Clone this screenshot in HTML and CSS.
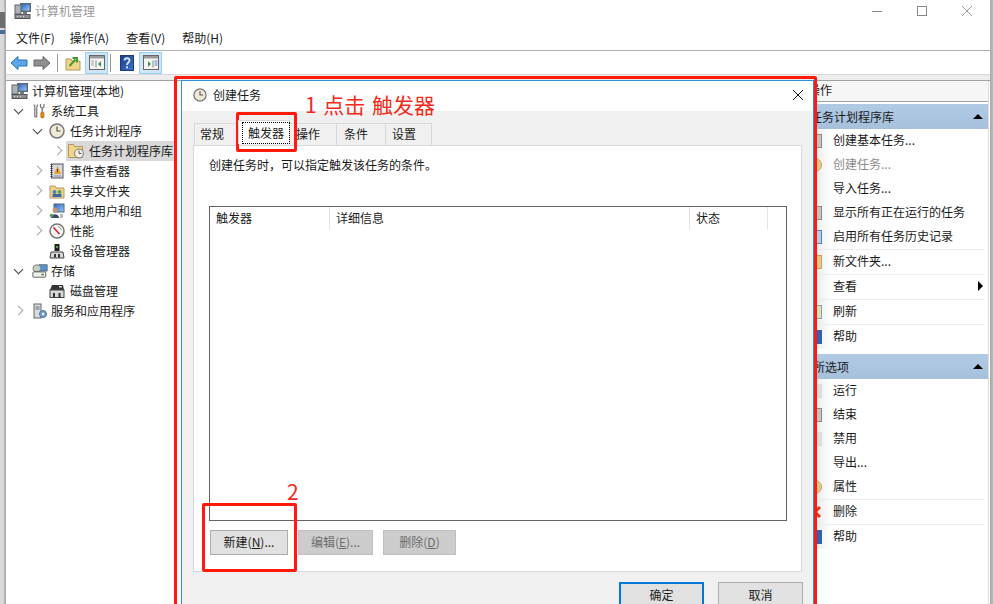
FILE: index.html
```html
<!DOCTYPE html>
<html lang="zh-CN">
<head>
<meta charset="utf-8">
<title>计算机管理</title>
<link rel="stylesheet" href="styles.css">
</head>
<body>
<svg class="defs" width="0" height="0">
  <defs>
    <linearGradient id="g-screen" x1="0" y1="0" x2="1" y2="1"><stop offset="0" stop-color="#2a66c8"/><stop offset="1" stop-color="#9cc8f0"/></linearGradient>
    <linearGradient id="g-help" x1="0" y1="0" x2="1" y2="1"><stop offset="0" stop-color="#1a3f86"/><stop offset="1" stop-color="#3c74c8"/></linearGradient>
  </defs>
  <symbol id="i-computer" viewBox="0 0 18 18">
    <rect x="6" y="1" width="11" height="9" fill="#5a6b7c"/><rect x="7.500" y="2.500" width="8" height="6" fill="url(#g-screen)"/>
    <rect x="1" y="3" width="6" height="9" fill="#aab2ba" stroke="#666"/><rect x="1" y="12.500" width="15" height="4" fill="#8a8f94" stroke="#555"/><rect x="9" y="10" width="4" height="2.500" fill="#777"/><path d="M3 14.500h1M6 14.500h1M9 14.500h1" stroke="#ddd"/>
  </symbol>
  <symbol id="i-clock" viewBox="0 0 16 16">
    <circle cx="8" cy="8" r="7" fill="#efe9d8" stroke="#777" stroke-width="1.500"/><path d="M8 3.500V8H11.500" fill="none" stroke="#555" stroke-width="1.200"/>
  </symbol>
  <symbol id="i-tools" viewBox="0 0 16 16">
    <path d="M2 1.500l.8 3v9.500h2V4.500l.8-3" fill="#e4e4e4" stroke="#666"/><path d="M8.500 1v3l1.800 1.500L12 4V1" fill="none" stroke="#777" stroke-width="1.200"/><path d="M10.300 5.500V9" stroke="#888" stroke-width="1.600"/><rect x="8.800" y="9" width="3.200" height="6" rx="1.200" fill="#dc8a14" stroke="#a85f08" stroke-width=".6"/>
  </symbol>
  <symbol id="i-log" viewBox="0 0 16 16">
    <rect x="2.500" y="1" width="11.500" height="14" fill="#d4dae0" stroke="#556"/><path d="M2.500 1v14" stroke="#334" stroke-width="2" stroke-dasharray="1 1"/><path d="M8.500 3l3.500 8H5z" fill="#e8a020"/><rect x="8" y="6" width="1" height="3" fill="#633"/><path d="M5 13h7" stroke="#889"/>
  </symbol>
  <symbol id="i-share" viewBox="0 0 16 16">
    <path d="M1 3h5l1 2h8v10H1z" fill="#f0d48a" stroke="#b8965a"/><circle cx="5.500" cy="9" r="2" fill="#4a7fc0"/><circle cx="10.500" cy="9" r="2" fill="#5aa050"/><rect x="3.500" y="11" width="9" height="3" fill="#3b6aa0"/>
  </symbol>
  <symbol id="i-users" viewBox="0 0 16 16">
    <rect x="5" y="1" width="10" height="8" fill="url(#g-screen)" stroke="#567"/><circle cx="6" cy="7" r="2.500" fill="#c89468"/><path d="M2 15c0-5 8-5 8 0z" fill="#3a4a70"/><circle cx="2.500" cy="12.500" r="1.800" fill="#5aa050"/><path d="M11 11h3v4h-3z" fill="#bbb"/>
  </symbol>
  <symbol id="i-perf" viewBox="0 0 16 16">
    <circle cx="8" cy="8" r="7" fill="#f6f6f6" stroke="#777" stroke-width="1.500"/><path d="M4.500 4.500L10.500 11" stroke="#d02020" stroke-width="1.600"/><path d="M9 3.500a5 5 0 0 1 3.500 3.500" fill="none" stroke="#999"/>
  </symbol>
  <symbol id="i-device" viewBox="0 0 16 16">
    <rect x="5.500" y="1" width="5" height="7" fill="#222"/><rect x="7.200" y="3" width="1.600" height="2" fill="#5c5"/><path d="M2 9h12l1 6H1z" fill="#d8d8d8" stroke="#444"/><rect x="5" y="11" width="2" height="3.500" fill="#333"/><rect x="9" y="11" width="2" height="3.500" fill="#333"/>
  </symbol>
  <symbol id="i-storage" viewBox="0 0 18 16">
    <rect x="8" y="1" width="9" height="7" fill="#4f94d8" stroke="#567"/><ellipse cx="5.500" cy="5" rx="4.500" ry="4" fill="#c4d0c0" stroke="#777"/><rect x="1" y="9" width="14.500" height="6" rx="1" fill="#eef0ee" stroke="#555"/><rect x="10.500" y="11" width="3" height="2" fill="#5a9a40"/>
  </symbol>
  <symbol id="i-disk" viewBox="0 0 16 16">
    <path d="M3 2h11l1 5H1z" fill="#333"/><rect x="10" y="3" width="3" height="1.500" fill="#ddd"/><rect x="1" y="7" width="14" height="7.500" fill="#d8d8d8" stroke="#444"/><rect x="4" y="10" width="2" height="4.500" fill="#333"/><rect x="9.500" y="10" width="2" height="4.500" fill="#333"/>
  </symbol>
  <symbol id="i-service" viewBox="0 0 16 16">
    <rect x="2" y="1" width="7" height="14" fill="#d8dce0" stroke="#666"/><path d="M3.500 4h4M3.500 6h4" stroke="#667"/><circle cx="11" cy="11" r="3.500" fill="#78a4d0" stroke="#4a74a4"/><circle cx="11" cy="11" r="1.200" fill="#fff"/>
  </symbol>
  <symbol id="i-help" viewBox="0 0 14 16">
    <rect x=".5" y=".5" width="13" height="15" fill="url(#g-help)" stroke="#1a3d7c"/><path d="M4.500 5.500c0-3 5-3 5 0 0 2-2.500 2-2.500 4.500" fill="none" stroke="#d8e4f4" stroke-width="1.800"/><rect x="6" y="11.300" width="2" height="2" fill="#d8e4f4"/>
  </symbol>
</svg>

<div class="window">
  <header class="titlebar">
    <svg class="ico16" width="18" height="18"><use href="#i-computer"/></svg>
    <span class="title-text">计算机管理</span>
    <div class="winctl">
      <svg width="12" height="12" viewBox="0 0 12 12"><path d="M1 6.500h10" stroke="#888"/></svg>
      <svg width="12" height="12" viewBox="0 0 12 12"><rect x="1.500" y="1.500" width="9" height="9" fill="none" stroke="#888"/></svg>
      <svg width="12" height="12" viewBox="0 0 12 12"><path d="M1 1l10 10M11 1L1 11" stroke="#999"/></svg>
    </div>
  </header>
  <nav class="menubar">
    <span class="m-first">文件(F)</span><span>操作(A)</span><span>查看(V)</span><span>帮助(H)</span>
  </nav>
  <div class="toolbar">
    <svg class="tb" width="18" height="18" viewBox="0 0 18 18"><path d="M1 9l7-6.500V6h9v6H8v3.500z" fill="#5aa8e8" stroke="#2a70b8"/></svg>
    <svg class="tb tb-last" width="18" height="18" viewBox="0 0 18 18"><path d="M17 9l-7-6.500V6H1v6h9v3.500z" fill="#909090" stroke="#666"/></svg>
    <i class="tb-sep"></i>
    <svg class="tb tb-folder" width="16" height="16" viewBox="0 0 16 16"><path d="M1 4h5l1 2h8v9H1z" fill="#f0d48a" stroke="#b8965a"/><path d="M4.500 11l6-6.500M7.500 3h4.500v4.500" fill="none" stroke="#4a9a30" stroke-width="2"/></svg>
    <span class="tb-on"><svg width="16" height="15" viewBox="0 0 16 15"><rect x=".5" y=".5" width="15" height="14" fill="#f4f4f4" stroke="#666"/><rect x="1" y="1" width="14" height="2.500" fill="#999"/><path d="M7 5.500v7" stroke="#888"/><path d="M2 6h3M2 8h3M2 10h3" stroke="#aaa"/><path d="M12 6v6l-3-3z" fill="#3a9a50"/></svg></span>
    <i class="tb-sep tb-sep2"></i>
    <svg class="tb tb-help" width="14" height="16"><use href="#i-help"/></svg>
    <span class="tb-on"><svg width="16" height="15" viewBox="0 0 16 15"><rect x=".5" y=".5" width="15" height="14" fill="#f4f4f4" stroke="#666"/><rect x="1" y="1" width="14" height="2.500" fill="#999"/><path d="M10 5.500v7" stroke="#888"/><path d="M11.500 6h3M11.500 8h3M11.500 10h3" stroke="#5a8ac8"/><path d="M5 6v6l3-3z" fill="#3a9a50"/></svg></span>
  </div>
  <div class="strip"></div>

  <main class="panes">
    <aside class="tree">
      <div class="row l0"><svg class="ic" width="18" height="18"><use href="#i-computer"/></svg><span>计算机管理(本地)</span></div>
      <div class="row l1"><b class="chev down"></b><svg class="ic" width="16" height="16"><use href="#i-tools"/></svg><span>系统工具</span></div>
      <div class="row l2"><b class="chev down"></b><svg class="ic" width="16" height="16"><use href="#i-clock"/></svg><span>任务计划程序</span></div>
      <div class="row l3"><b class="chev"></b><span class="sel"><svg class="ic" width="16" height="16" viewBox="0 0 16 16"><path d="M.5 1.500h5l1 2h8v11H.5z" fill="#f0d48a" stroke="#b8965a"/><circle cx="11" cy="10.500" r="4.500" fill="#f4f0e4" stroke="#777"/><path d="M11 7.500v3h2.500" fill="none" stroke="#555"/></svg><span>任务计划程序库</span></span></div>
      <div class="row l2"><b class="chev"></b><svg class="ic" width="16" height="16"><use href="#i-log"/></svg><span>事件查看器</span></div>
      <div class="row l2"><b class="chev"></b><svg class="ic" width="16" height="16"><use href="#i-share"/></svg><span>共享文件夹</span></div>
      <div class="row l2"><b class="chev"></b><svg class="ic" width="16" height="16"><use href="#i-users"/></svg><span>本地用户和组</span></div>
      <div class="row l2"><b class="chev"></b><svg class="ic" width="16" height="16"><use href="#i-perf"/></svg><span>性能</span></div>
      <div class="row l2"><b class="chev none"></b><svg class="ic" width="16" height="16"><use href="#i-device"/></svg><span>设备管理器</span></div>
      <div class="row l1"><b class="chev down"></b><svg class="ic" width="16" height="16"><use href="#i-storage"/></svg><span>存储</span></div>
      <div class="row l2"><b class="chev none"></b><svg class="ic" width="16" height="16"><use href="#i-disk"/></svg><span>磁盘管理</span></div>
      <div class="row l1"><b class="chev"></b><svg class="ic" width="16" height="16"><use href="#i-service"/></svg><span>服务和应用程序</span></div>
    </aside>

    <div class="center"></div>

    <aside class="actions">
      <div class="act-head"><span>操作</span></div>
      <div class="band band-a"><span>任务计划程序库</span><i class="up"></i></div>
      <ul class="act-list">
        <li><span class="aic gray"></span>创建基本任务...</li>
        <li class="off"><span class="aic tan round"></span>创建任务...</li>
        <li><span class="aic none"></span>导入任务...</li>
        <li><span class="aic gray"></span>显示所有正在运行的任务</li>
        <li class="sep"><span class="aic blue"></span>启用所有任务历史记录</li>
        <li class="sep"><span class="aic tan"></span>新文件夹...</li>
        <li class="sep"><span class="aic none"></span>查看<i class="more"></i></li>
        <li class="sep"><span class="aic green"></span>刷新</li>
        <li><span class="aic navy"></span>帮助</li>
      </ul>
      <div class="band band-b"><span>所选项</span><i class="up"></i></div>
      <ul class="act-list">
        <li><span class="aic lt"></span>运行</li>
        <li><span class="aic gray"></span>结束</li>
        <li><span class="aic lt"></span>禁用</li>
        <li><span class="aic none"></span>导出...</li>
        <li class="sep"><span class="aic tan round"></span>属性</li>
        <li class="sep"><svg class="aic none" width="14" height="14" viewBox="0 0 14 14"><path d="M2 2l10 10M12 2L2 12" stroke="#d83a20" stroke-width="3"/></svg>删除</li>
        <li><span class="aic navy"></span>帮助</li>
      </ul>
    </aside>
  </main>
</div>

<section class="dialog">
  <header class="dlg-title">
    <svg class="ic" width="14" height="14"><use href="#i-clock"/></svg>
    <span>创建任务</span>
    <svg class="dlg-x" width="12" height="12" viewBox="0 0 12 12"><path d="M1 1l10 10M11 1L1 11" stroke="#111"/></svg>
  </header>
  <div class="dlg-body">
    <div class="tabs">
      <span class="tab t1">常规</span>
      <span class="tab active"><span class="focus">触发器</span></span>
      <span class="tab t3">操作</span>
      <span class="tab t4">条件</span>
      <span class="tab t5">设置</span>
    </div>
    <div class="panel">
      <p class="hint">创建任务时，可以指定触发该任务的条件。</p>
      <div class="list">
        <div class="list-head">
          <span class="c1">触发器</span><span class="c2">详细信息</span><span class="c3">状态</span>
        </div>
      </div>
      <div class="list-btns">
        <button class="btn b-new">新建(<u>N</u>)...</button>
        <button class="btn b-edit" disabled>编辑(<u>E</u>)...</button>
        <button class="btn b-del" disabled>删除(<u>D</u>)</button>
      </div>
    </div>
    <div class="dlg-foot">
      <button class="btn ok">确定</button>
      <button class="btn cancel">取消</button>
    </div>
  </div>
</section>

<div class="mark m-dialog"></div>
<div class="mark m-tab"></div>
<div class="mark m-new"></div>
<div class="note n1">1 点击 触发器</div>
<div class="note n2">2</div>
</body>
</html>
```
FILE: styles.css
```css
* { box-sizing: border-box; }
html, body { margin: 0; height: 100%; }
body {
  width: 993px; height: 604px; overflow: hidden; position: relative;
  background:
    linear-gradient(#6e6e6e, #6e6e6e) 0 12px / 5px 16px no-repeat,
    linear-gradient(#4a6a9a, #4a6a9a) 0 30px / 5px 4px no-repeat,
    linear-gradient(to right, #dcdcdc 0, #d4d4d4 4px, #a8a8a8 5px, #a8a8a8 6px, #a8a8a8 990px, #bcbcbc 993px);
  padding: 0 3px 0 6px;
  font: 12px/16px "Noto Sans CJK SC", "Noto Sans", sans-serif; color: #1a1a1a;
}
.defs { position: absolute; }
.window { height: 604px; background: #fff; display: flex; flex-direction: column; }
.titlebar { height: 30px; flex: none; display: flex; align-items: center; padding: 0 0 8px 8px; color: #999; }
.title-text { margin-left: 3px; }
.winctl { margin-left: auto; display: flex; gap: 33px; padding-right: 17px; }
.menubar { height: 21px; flex: none; display: flex; gap: 17px; padding: 0 0 4px 10px; align-items: center; border-bottom: 1px solid #b0b0b0; }
.m-first { margin-right: -2px; }
.toolbar { height: 23px; flex: none; display: flex; align-items: center; padding-left: 4px; background: #fff; }
.tb { margin-right: 5px; flex: none; }
.tb-last { margin-right: 6px; }
.tb-sep { width: 1px; height: 18px; background: #999; margin: 0 7px 0 0; flex: none; }
.tb-folder { margin-right: 4px; }
.tb-sep2 { margin: 0 9px 0 2px; }
.tb-on { width: 23px; height: 22px; background: #cfe6f8; border: 1px solid #99d1f5; display: flex; align-items: center; justify-content: center; flex: none; }
.strip { height: 7px; flex: none; background: #ededed; border-top: 1px solid #d8d8d8; border-bottom: 1px solid #a0a0a0; }
.panes { flex: 1; display: flex; min-height: 0; }
.tree { width: 168px; flex: none; padding: 0 0 0 4px; }
.center { flex: 1; }
.row { height: 20px; display: flex; align-items: center; white-space: nowrap; }
.row .ic { flex: none; margin-right: 3px; }
.l0 { padding-left: 1px; }
.l1 { padding-left: 3px; }
.l2 { padding-left: 20px; }
.l2 .ic { margin-right: 5px; }
.l3 { padding-left: 41px; }
.chev { width: 19px; height: 16px; flex: none; position: relative; }
.l3 .chev { width: 15px; }
.chev::before {
  content: ""; position: absolute; left: 2px; top: 4px; width: 6px; height: 6px;
  border-top: 1.4px solid #a6a6a6; border-right: 1.4px solid #a6a6a6; transform: rotate(45deg);
}
.l2 .chev::before { left: 4px; }
.l3 .chev::before { left: 3px; }
.chev.down::before { top: 3px; transform: rotate(135deg); border-color: #444; }
.chev.none::before { display: none; }
.l3 .ic { margin-right: 5px; }
.sel { display: flex; align-items: center; background: #d9d9d9; height: 20px; padding: 0 0 0 2px; width: 108px; }
.actions { width: 186px; flex: none; margin-right: 1px; border-right: 1px solid #dedede; font-size: 12px; }
.act-head { height: 21px; padding: 0 0 2px 5px; display: flex; align-items: center; background: #f6f6f6; border-bottom: 1px solid #a0a0a0; }
.band { height: 25px; background: linear-gradient(#b1cae4, #a6c0dc); display: flex; align-items: center; }
.band-a { margin-top: 2px; padding-left: 7px; }
.band-b { margin-top: 5px; padding-left: 10px; }
.band .up { margin-left: auto; margin-right: 5px; width: 0; height: 0; border: 5px solid transparent; border-top: 0; border-bottom: 5px solid #000; }
.act-list { list-style: none; margin: 0; padding: 0; background: linear-gradient(to right, #ececec 14px, #fff 28px); }
.act-list li { height: 24px; display: flex; align-items: center; position: relative; padding: 0 0 2px 30px; margin-right: 4px; }
.act-list li.sep { height: 25px; border-bottom: 1px solid #ececec; }
.off { color: #8c8c8c; }
.aic { position: absolute; left: 5px; top: 5px; width: 14px; height: 14px; }
.gray { background: #c4c4c4; border: 1px solid #8a8a8a; } .tan { background: #e8c88a; border: 1px solid #c8a060; } .blue { background: #b4cdec; border: 1px solid #5a80b8; }
.round { border-radius: 50%; }
.green { background: #cfe4c8; border: 1px solid #9a9a9a; } .navy { background: #2f62b4; } .lt { background: #dcdcdc; }
.more { margin-left: auto; margin-right: 1px; width: 0; height: 0; border: 5px solid transparent; border-right: 0; border-left: 5px solid #000; }

.dialog { position: absolute; left: 181px; top: 80px; width: 633px; height: 524px; overflow: hidden; background: #f0f0f0; border: 1px solid #2f8fdc; border-bottom: 0; display: flex; flex-direction: column; }
.dlg-title { height: 30px; flex: none; background: #fff; display: flex; align-items: center; padding: 0 0 2px 11px; }
.dlg-title .ic { margin-right: 6px; }
.dlg-x { margin-left: auto; margin-right: 9px; }
.dlg-body { flex: 1; padding: 12px 11px 0 11px; }
.tabs { display: flex; height: 22px; padding-left: 1px; position: relative; }
.tab { height: 22px; padding: 0 0 2px 5px; background: #f0f0f0; border: 1px solid #d9d9d9; border-bottom: 0; display: flex; align-items: center; flex: none; }
.t1 { width: 44px; }
.active { width: 52px; height: 24px; margin-top: -3px; background: #fff; z-index: 1; padding: 0 0 0 4px; }
.t3 { width: 48px; margin-left: -1px; border-left: 0; padding-left: 7px; }
.t4 { width: 49px; border-left: 0; padding-left: 7px; }
.t5 { width: 46px; border-left: 0; padding-left: 6px; }
.focus { outline: 1px dotted #000; padding: 2px 5px; white-space: nowrap; line-height: 16px; }
.panel { height: 427px; background: #fff; border: 1px solid #d9d9d9; padding: 11px 14px 0 15px; }
.hint { margin: 0; height: 16px; }
.list { height: 315px; margin-top: 33px; border: 1px solid #646464; }
.list-head { display: flex; height: 23px; align-items: center; }
.list-head span { height: 23px; padding: 0 0 2px 6px; border-right: 1px solid #e4e4e4; display: flex; align-items: center; }
.c1 { width: 120px; } .c2 { width: 360px; } .c3 { width: 78px; }
.list-btns { display: flex; margin-top: 9px; padding-left: 1px; gap: 10px; }
.btn { font: inherit; height: 25px; padding: 0 0 2px; background: #e1e1e1; border: 1px solid #adadad; color: #1a1a1a; }
.btn:disabled { background: #ccc; border-color: #bfbfbf; color: #6d6d6d; }
.b-new { width: 78px; } .b-edit { width: 75px; } .b-del { width: 73px; }
.dlg-foot { display: flex; justify-content: flex-end; gap: 14px; margin-top: 10px; margin-right: -1px; }
.ok { width: 85px; height: 22px; border: 2px solid #0078d7; border-bottom: 0; padding: 1px 0 0; }
.cancel { width: 85px; height: 22px; border-bottom: 0; padding: 2px 0 0; }

.mark { position: absolute; border: 3px solid #ff1a0a; border-radius: 2px; }
.m-dialog { left: 174px; top: 76px; width: 643px; height: 528px; border-bottom: 0; border-radius: 3px 3px 0 0; }
.m-tab { left: 236px; top: 112px; width: 61px; height: 40px; }
.m-new { left: 202px; top: 503px; width: 95px; height: 69px; }
.note { position: absolute; color: #f5281a; font-size: 21px; font-weight: 400; line-height: 26px; white-space: nowrap; word-spacing: 2px; }
.n1 { left: 305px; top: 91px; }
.n2 { left: 287px; top: 478px; }
```
